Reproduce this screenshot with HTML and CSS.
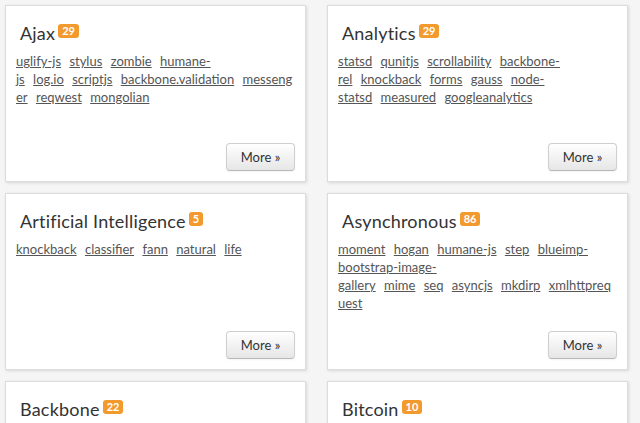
FILE: index.html
```html
<!DOCTYPE html>
<html>
<head>
<meta charset="utf-8">
<link rel="stylesheet" href="styles.css">
</head>
<body>
<div class="grid">
  <div class="card">
    <h3 class="title">Ajax<span class="badge">29</span></h3>
    <div class="links">
      <a href="#">uglify-js</a> <a href="#">stylus</a> <a href="#">zombie</a> <a href="#">humane-<br>js</a> <a href="#">log.io</a> <a href="#">scriptjs</a> <a href="#">backbone.validation</a> <a href="#">messeng<br>er</a> <a href="#">reqwest</a> <a href="#">mongolian</a>
    </div>
    <a class="btn" href="#">More »</a>
  </div>
  <div class="card">
    <h3 class="title">Analytics<span class="badge">29</span></h3>
    <div class="links">
      <a href="#">statsd</a> <a href="#">qunitjs</a> <a href="#">scrollability</a> <a href="#">backbone-<br>rel</a> <a href="#">knockback</a> <a href="#">forms</a> <a href="#">gauss</a> <a href="#">node-<br>statsd</a> <a href="#">measured</a> <a href="#">googleanalytics</a>
    </div>
    <a class="btn" href="#">More »</a>
  </div>
  <div class="card">
    <h3 class="title">Artificial Intelligence<span class="badge">5</span></h3>
    <div class="links">
      <a href="#">knockback</a> <a href="#">classifier</a> <a href="#">fann</a> <a href="#">natural</a> <a href="#">life</a>
    </div>
    <a class="btn" href="#">More »</a>
  </div>
  <div class="card">
    <h3 class="title">Asynchronous<span class="badge">86</span></h3>
    <div class="links">
      <a href="#">moment</a> <a href="#">hogan</a> <a href="#">humane-js</a> <a href="#">step</a> <a href="#">blueimp-<br>bootstrap-image-<br>gallery</a> <a href="#">mime</a> <a href="#">seq</a> <a href="#">asyncjs</a> <a href="#">mkdirp</a> <a href="#">xmlhttpreq<br>uest</a>
    </div>
    <a class="btn" href="#">More »</a>
  </div>
  <div class="card">
    <h3 class="title">Backbone<span class="badge">22</span></h3>
  </div>
  <div class="card">
    <h3 class="title">Bitcoin<span class="badge">10</span></h3>
  </div>
</div>
</body>
</html>
```
FILE: styles.css
```css
html, body {
  margin: 0;
  padding: 0;
  background: #f5f5f5;
  font-family: Lato, "Open Sans", sans-serif;
  overflow: hidden;
}
.grid {
  display: grid;
  grid-template-columns: 301px 301px;
  column-gap: 21px;
  row-gap: 11px;
  padding: 5px 0 0 5px;
}
.card {
  box-sizing: border-box;
  height: 177px;
  background: #fff;
  border: 1px solid #dcdcdc;
  box-shadow: 1px 1px 3px rgba(0,0,0,0.12);
  padding: 10px;
  display: flex;
  flex-direction: column;
}
.title {
  margin: 7px 0 0 4px;
  font-size: 18px;
  line-height: 20px;
  font-weight: 400;
  color: #333;
  letter-spacing: 0.2px;
}
.badge {
  display: inline-block;
  margin-left: 3px;
  padding: 0 4px;
  height: 14px;
  line-height: 14px;
  font-size: 11px;
  font-weight: 700;
  color: #fff;
  background: #f29a2e;
  border-radius: 3px;
  vertical-align: 5px;
  letter-spacing: 0;
}
.links {
  margin-top: 9px;
  font-size: 13px;
  line-height: 18px;
}
.links a {
  color: #555;
  text-decoration: underline;
  margin-right: 5px;
}
.btn {
  margin-top: auto;
  align-self: flex-end;
  box-sizing: border-box;
  width: 69px;
  height: 28px;
  line-height: 26px;
  text-align: center;
  font-size: 13px;
  color: #333;
  text-decoration: none;
  border: 1px solid #cfcfcf;
  border-bottom-color: #b8b8b8;
  border-radius: 4px;
  background: linear-gradient(#ffffff, #e6e6e6);
  box-shadow: inset 0 1px 0 rgba(255,255,255,0.2), 0 1px 2px rgba(0,0,0,0.05);
}
```
